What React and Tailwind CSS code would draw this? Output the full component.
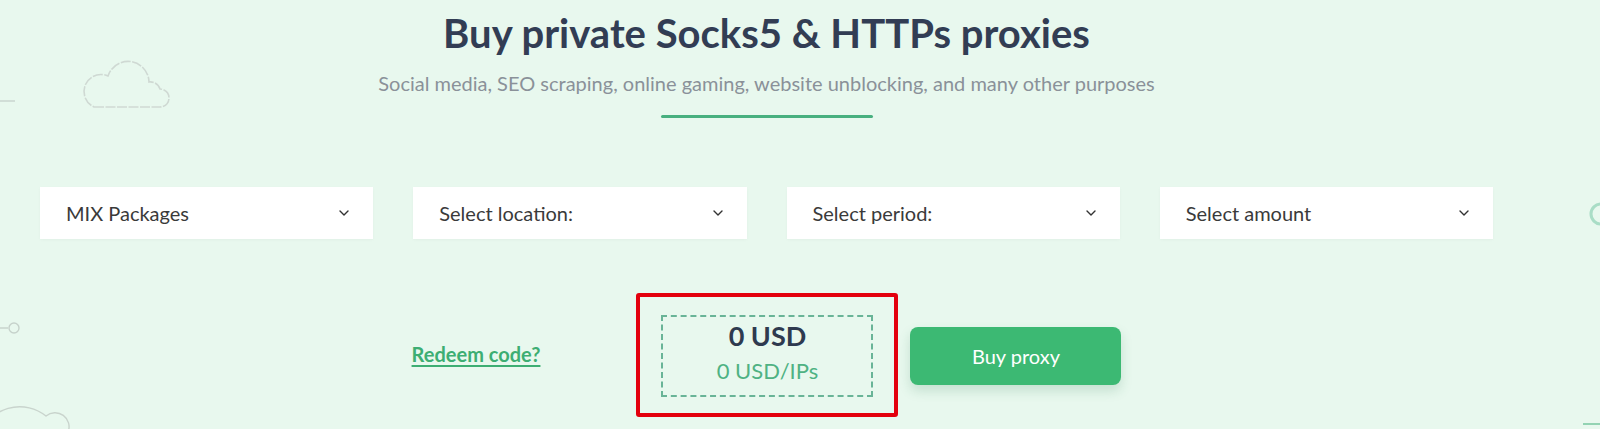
import React from "react";

function Chevron() {
  return (
    <svg width="10" height="6" viewBox="0 0 10 6" fill="none">
      <path d="M1 1l4 4 4-4" stroke="#333" strokeWidth="1.4" strokeLinecap="round" strokeLinejoin="round" />
    </svg>
  );
}

function Select({ label }) {
  return (
    <div className="bg-white h-[52px] flex items-center justify-between pl-[26px] pr-[24px] text-[20px] text-[#3a3a3a] shadow-[0_1px_3px_rgba(0,0,0,0.03)]">
      <span>{label}</span>
      <Chevron />
    </div>
  );
}

export default function App() {
  return (
    <div className="relative w-[1600px] h-[429px] overflow-hidden bg-[#e8f8ee] [font-family:Lato,'Noto_Sans',sans-serif]">
      {/* decorations */}
      <svg className="absolute left-0 top-0" width="1600" height="429" viewBox="0 0 1600 429" fill="none">
        <line x1="0" y1="101" x2="15" y2="101" stroke="#cad6cf" strokeWidth="1.5" />
        <path
          d="M94 107 H160 A8 8 0 0 0 160 89 A10 10 0 0 0 149 82 A21 21 0 0 0 108 76 A16 16 0 0 0 94 107 Z"
          stroke="#cfd9d3"
          strokeWidth="1.6"
          strokeDasharray="10 1.5"
        />
        <line x1="0" y1="328" x2="8" y2="328" stroke="#c6d2cb" strokeWidth="1.4" />
        <circle cx="14" cy="328" r="5" stroke="#c6d2cb" strokeWidth="1.4" />
        <path d="M-20 435 A42 42 0 0 1 46 416 A14 14 0 0 1 68 432" stroke="#c9d4cd" strokeWidth="1.4" />
        <circle cx="1601" cy="214" r="10" stroke="#a9ddc6" strokeWidth="3" />
        <line x1="1583" y1="424" x2="1600" y2="424" stroke="#93d3b3" strokeWidth="2" />
      </svg>

      <div className="relative ml-[40px] w-[1453px] flex flex-col items-center">
        <h1 className="mt-[9px] text-[40px] leading-[48px] font-bold text-[#323d54]">
          Buy private Socks5 &amp; HTTPs proxies
        </h1>
        <p className="mt-[14px] text-[20px] leading-[24px] text-[#8a9199]">
          Social media, SEO scraping, online gaming, website unblocking, and many other purposes
        </p>
        <div className="mt-[20px] w-[212px] h-[3px] bg-[#48b07f] rounded-full" />

        <div className="mt-[69px] w-full grid grid-cols-4 gap-[40px]">
          <Select label="MIX Packages" />
          <Select label="Select location:" />
          <Select label="Select period:" />
          <Select label="Select amount" />
        </div>

        <div className="mt-[76px] flex items-center">
          <a className="text-[20px] leading-[24px] font-bold text-[#3dae73] underline underline-offset-[3px] decoration-[1.5px] -mt-[4px]">
            Redeem code?
          </a>
          <div className="relative ml-[121px] w-[212px] h-[82px] border-2 border-dashed border-[#69b497] flex flex-col items-center pt-[3px]">
            <div className="text-[27px] leading-[32px] font-bold text-[#2e3a4f]">0 USD</div>
            <div className="mt-[6px] text-[22px] leading-[26px] text-[#4fb283]">0 USD/IPs</div>
            <div className="absolute -left-[27px] -right-[27px] -top-[24px] -bottom-[22px] border-4 border-[#e3000d] rounded-[3px]" />
          </div>
          <button className="ml-[37px] w-[211px] h-[58px] rounded-[8px] bg-[#3cb973] text-white text-[20px] shadow-[0_6px_12px_rgba(40,120,80,0.18)]">
            Buy proxy
          </button>
        </div>
      </div>
    </div>
  );
}
